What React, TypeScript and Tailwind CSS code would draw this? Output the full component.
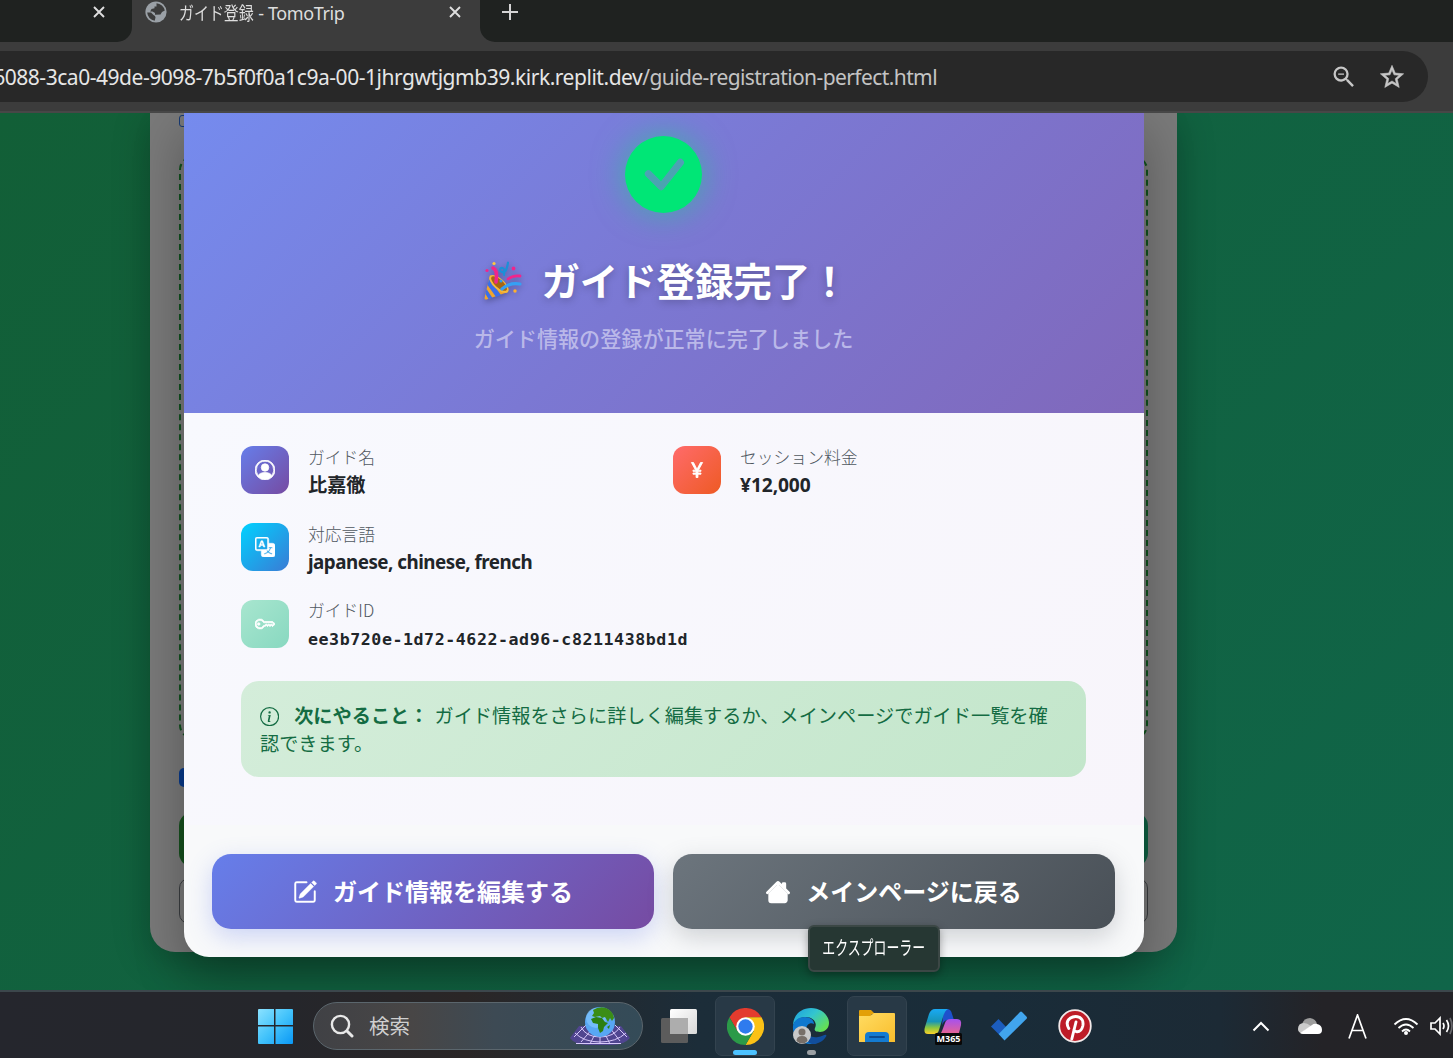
import React from "react";
import {
  BsCheckCircleFill,
  BsPersonCircle,
  BsCurrencyYen,
  BsTranslate,
  BsKey,
  BsInfoCircle,
  BsPencilSquare,
  BsHouseFill,
} from "react-icons/bs";
import { MdOutlineZoomOut, MdStarOutline } from "react-icons/md";

function CloseIcon() {
  return (
    <svg width="12" height="12" viewBox="0 0 12 12" className="shrink-0">
      <path d="M1 1l10 10M11 1L1 11" stroke="#dedede" strokeWidth="1.9" />
    </svg>
  );
}

function GlobeIcon() {
  return (
    <svg width="22" height="22" viewBox="0 0 22 22" className="mt-[1px] shrink-0">
      <circle cx="11" cy="11" r="10.600" fill="#9aa0a6" />
      <path
        d="M11.500 2.200A8.900 8.900 0 0 1 19.800 9.500L17 11l-1.500 2.500-5.500.3V12L7.500 10.500H5.200L6.500 8l3-.8V5.500h2zM2.200 11.500H6l2.500 2.500 1.500 1 .5 1.500-.8 3.300A8.900 8.900 0 0 1 2.200 11.500z"
        fill="#3c3c3c"
      />
    </svg>
  );
}

function TabStrip() {
  return (
    <div className="flex h-[42px] shrink-0 bg-[#3c3c3c]">
      <div className="flex w-[132px] justify-end rounded-br-[15px] bg-[#1f2220] pt-[6px] pr-[27px]">
        <CloseIcon />
      </div>
      <div className="flex w-[348px] items-start pl-[13px]">
        <GlobeIcon />
        <div className="ml-[12px] w-[270px] pt-[1px] text-[18px] leading-[24px] whitespace-nowrap text-[#dedede]">
          <span className="inline-block w-[75px] origin-left scale-x-[0.83]">ガイド登録</span>
          <span className="tracking-[-0.4px]"> - TomoTrip</span>
        </div>
        <div className="pt-[6px]">
          <CloseIcon />
        </div>
      </div>
      <div className="flex-1 rounded-bl-[15px] bg-[#1f2220] pt-[4px] pl-[22px]">
        <svg width="16" height="16" viewBox="0 0 16 16">
          <path d="M8 0v16M0 8h16" stroke="#d4d4d4" strokeWidth="2" />
        </svg>
      </div>
    </div>
  );
}

function Toolbar() {
  return (
    <div className="h-[71px] shrink-0 border-b-2 border-[#474747] bg-[#3c3c3c] pt-[9px] pr-[25px]">
      <div className="flex h-[51px] items-center rounded-r-full bg-[#282828]">
        <div className="flex w-[937px] shrink-0 justify-end overflow-hidden text-[21px] leading-[30px] whitespace-nowrap">
          <span className="tracking-[-0.46px] text-[#e6e6e6]">
            6088-3ca0-49de-9098-7b5f0f0a1c9a-00-1jhrgwtjgmb39.kirk.replit.dev
          </span>
          <span className="tracking-[-0.590px] text-[#c4c4c4]">/guide-registration-perfect.html</span>
        </div>
        <div className="flex flex-1 items-center justify-end gap-[20px] pr-[22px] text-[#c7c7c7]">
          <MdOutlineZoomOut className="size-[28px]" />
          <MdStarOutline className="size-[28px] stroke-current stroke-[0.5]" />
        </div>
      </div>
    </div>
  );
}

function PartyPopper() {
  return (
    <svg width="40" height="40" viewBox="0 0 40 40" className="drop-shadow-[0_2px_3px_rgba(0,0,0,0.3)]">
      <path d="M7 14L1.500 37q0 2 2 1.500L25 31z" fill="#f0a52e" />
      <path d="M6 18l12 16-5 2L4.500 24zM3.500 28l6 9-4 1-3-5z" fill="#3c6fe8" />
      <ellipse cx="16" cy="23" rx="12" ry="5.500" transform="rotate(42 16 23)" fill="#f6b93c" />
      <ellipse cx="16" cy="22.500" rx="10" ry="4" transform="rotate(42 16 22.500)" fill="#a56613" />
      <path d="M10 7q5 2 3 14" fill="none" stroke="#f0258c" strokeWidth="3.600" strokeLinecap="round" />
      <path d="M25 18q5-4 12-3" fill="none" stroke="#f0258c" strokeWidth="2.800" strokeLinecap="round" />
      <path d="M19 28q8-7 18-5" fill="none" stroke="#35a0f4" strokeWidth="3.200" strokeLinecap="round" />
      <path d="M25 1.500q-1 7-3 9t-5-1q0-3 2.500-2.500t1.500 7" fill="none" stroke="#1b90d8" strokeWidth="2.200" strokeLinecap="round" />
      <circle cx="11" cy="2.500" r="1.600" fill="#ffc83d" />
      <circle cx="30.500" cy="7.500" r="1.900" fill="#f0258c" />
      <circle cx="4" cy="9.500" r="1.600" fill="#f0258c" />
      <circle cx="32" cy="30" r="1.700" fill="#ffb02e" />
      <circle cx="18" cy="20" r="1.500" fill="#2d9bf0" />
    </svg>
  );
}

function ModalHeader() {
  return (
    <div className="flex h-[300px] flex-col items-center bg-linear-[135deg,#758bee_0%,#7b78d3_50%,#8068bb_100%] pt-[23px]">
      <BsCheckCircleFill className="mr-[1px] size-[77px] text-[#00e676] drop-shadow-[0_0_16px_rgba(0,230,118,0.5)]" />
      <div className="mt-[40px] flex h-[56px] items-center pl-[4px]">
        <PartyPopper />
        <h1 className="ml-[18px] text-[38.4px] leading-[56px] font-bold text-white [text-shadow:0_2px_8px_rgba(0,0,0,0.25)]">
          ガイド登録完了！
        </h1>
      </div>
      <p className="mt-[13px] mr-[1px] text-[21.1px] leading-[34px] font-medium text-[#bab8e9]">
        ガイド情報の登録が正常に完了しました
      </p>
    </div>
  );
}

type FieldProps = {
  icon: React.ReactNode;
  tile: string;
  label: string;
  children: React.ReactNode;
};

function Field({ icon, tile, label, children }: FieldProps) {
  return (
    <div className="flex h-[48px] items-center">
      <div className={"flex size-[48px] shrink-0 items-center justify-center rounded-[12px] text-[20px] text-white " + tile}>
        {icon}
      </div>
      <div className="ml-[19px] pt-[2px] whitespace-nowrap">
        <div className="font-['Noto_Sans_CJK_JP',sans-serif] text-[16.8px] leading-[27px] font-light text-[#4f575f]">{label}</div>
        <div className="text-[19.2px] leading-[28px] font-bold text-[#212529]">{children}</div>
      </div>
    </div>
  );
}

function ModalBody() {
  return (
    <div className="h-[412px] bg-linear-[135deg,#f8f9fe,#f8f5fb] px-[57px] pt-[33px]">
      <div className="grid grid-cols-[432px_1fr] gap-y-[29px]">
        <Field icon={<BsPersonCircle className="stroke-current stroke-[0.6]" />} tile="bg-linear-[135deg,#667eea,#764ba2]" label="ガイド名">
          比嘉徹
        </Field>
        <Field icon={<BsCurrencyYen className="stroke-current stroke-[0.7]" />} tile="bg-linear-[135deg,#ff6b6b,#ee5a24]" label="セッション料金">
          <span className="tracking-[-0.1px]">¥12,000</span>
        </Field>
        <div className="col-span-2">
          <Field icon={<BsTranslate className="stroke-current stroke-[0.4]" />} tile="bg-linear-[135deg,#00d2ff,#3a7bd5]" label="対応言語">
            <span className="text-[18.8px] tracking-[-0.500px]">japanese, chinese, french</span>
          </Field>
        </div>
        <div className="col-span-2">
          <Field icon={<BsKey className="stroke-current stroke-[0.6]" />} tile="bg-linear-[135deg,#a8e6cf,#88d8c0]" label="ガイドID">
            <span className="font-['DejaVu_Sans_Mono',monospace] text-[16.6px] tracking-[0.565px]">
              ee3b720e-1d72-4622-ad96-c8211438bd1d
            </span>
          </Field>
        </div>
      </div>
      <div className="mt-[33px] h-[96px] w-[845px] rounded-[18px] bg-linear-[135deg,#d4edda,#c3e6cb] pt-[21px] pr-[30px] pl-[19px] text-[19.2px] leading-[28px] text-[#146c43]">
        <BsInfoCircle className="mr-[15px] inline-block align-[-3px]" />
        <b className="font-bold">次にやること：</b>
        <span className="ml-[6px]">ガイド情報をさらに詳しく編集するか、メインページでガイド一覧を確認できます。</span>
      </div>
    </div>
  );
}

function ModalFooter() {
  return (
    <div className="flex h-[132px] gap-[19px] bg-[#f8f9fa] px-[28px] pt-[29px] text-[24px] font-bold text-white">
      <button className="flex h-[75px] w-[442px] items-center justify-center gap-[16px] rounded-[19px] bg-linear-[135deg,#667eea,#764ba2] shadow-[0_8px_25px_rgba(102,126,234,0.3)]">
        <BsPencilSquare className="stroke-current stroke-[0.3]" />
        <span>ガイド情報を編集する</span>
      </button>
      <button className="flex h-[75px] w-[442px] items-center justify-center gap-[17px] rounded-[19px] bg-linear-[135deg,#6c757d,#495057] shadow-[0_8px_25px_rgba(108,117,125,0.3)]">
        <BsHouseFill className="stroke-current stroke-[0.9]" />
        <span className="-ml-[1px]">メインページに戻る</span>
      </button>
    </div>
  );
}

function RegistrationCard() {
  return (
    <div className="mx-[150px] h-[839px] w-[1027px] rounded-b-[25px] bg-[#797979] px-[29px] pt-[2px] shadow-[0_8px_38px_rgba(0,0,0,0.24)]">
      <div className="h-[12px] w-[12px] rounded-[3px] border border-[#173a73]" />
      <div className="mt-[29px] h-[583px] rounded-[14px] border-2 border-dashed border-[#10511d]" />
      <div className="mt-[29px] h-[19px] w-[90px] rounded-[5px] bg-[#07398a]" />
      <div className="mt-[25px] h-[55px] rounded-[14px] bg-linear-[90deg,#15501d,#0d5f42]" />
      <div className="mt-[11px] h-[46px] rounded-[10px] border border-[#3a3d40]" />
    </div>
  );
}

function Page() {
  return (
    <main className="relative h-[877px] shrink-0 overflow-hidden bg-linear-[135deg,#125f37,#106549]">
      <RegistrationCard />
      <section className="absolute top-0 left-[184px] w-[960px] rounded-b-[25px] shadow-[0_20px_50px_rgba(0,0,0,0.3)]">
        <div className="overflow-hidden rounded-b-[25px]">
          <ModalHeader />
          <ModalBody />
          <ModalFooter />
        </div>
      </section>
    </main>
  );
}

function GlobeOnGrid() {
  return (
    <svg width="62" height="40" viewBox="0 0 62 40">
      <path d="M10 20h42l9 12q-6 7-18 7H18Q5 38 1 32z" fill="#5b43a8" opacity=".7" />
      <path d="M12 21q5 10 19 10t20-10M6 27q9 9 25 9t26-9M7 37.500h45M17 19L5 31M24 22L12 36M26 28l-5 10M31 29v9M36 28l5 10M41 22l10 13M46 19l12 12" fill="none" stroke="#d7c8fa" strokeWidth="1" />
      <circle cx="31" cy="16" r="15" fill="#58a7f4" />
      <circle cx="27" cy="12" r="10" fill="#86c9ff" opacity=".6" />
      <path d="M24 4q6-4 13-2 7 3 8 10l-2 3-2-3-2 4-3-5-3 1-2-2-5 1-3-1 2-3z" fill="#3b8d16" />
      <path d="M22 13l5-2 6 1 3 4 3 1-4 4-1 4-3 2-2-5v-4l-5-1z" fill="#2c7f13" />
      <path d="M38 21l3-2-1 4z" fill="#2c7f13" />
    </svg>
  );
}

function ChromeIcon() {
  return (
    <svg width="37" height="37" viewBox="0 0 48 48">
      <path d="M3.200 12A24 24 0 0 1 44.800 12H24L13.600 30z" fill="#e33b2e" />
      <path d="M44.800 12A24 24 0 0 1 24 48L34.400 30 24 12z" fill="#fbc116" />
      <path d="M24 48A24 24 0 0 1 3.200 12L13.600 30 34.400 30z" fill="#2b9a48" />
      <circle cx="24" cy="24" r="12" fill="#fff" />
      <circle cx="24" cy="24" r="9.300" fill="#2f7bee" />
    </svg>
  );
}

function EdgeIcon() {
  return (
    <svg width="38" height="38" viewBox="0 0 38 38">
      <defs>
        <linearGradient id="edgeTop" x1="0" y1="0" x2="1" y2=".7">
          <stop offset="0" stopColor="#1b9de0" />
          <stop offset=".5" stopColor="#33c5cf" />
          <stop offset="1" stopColor="#65e052" />
        </linearGradient>
      </defs>
      <path d="M1 19C1 8 9 1 19 1s18 7 18 15c0 6-5 9-9 9-5 0-6-2-5-4 3-6-3-11-9-11C7 10 2 14 1 19z" fill="url(#edgeTop)" />
      <path d="M1 19C2 13 7 10 13 10c5 0 9 3 9 7-4-2-8 1-8 6 0 6 5 10 11 13-2 1-4 1-6 1C9 37 0 29 1 19z" fill="#0f78cf" />
      <path d="M14 22c0 6 6 9 12 8 4 0 7-3 8-2 1 0 0 2-1 3-3 4-8 6-13 6-7-2-10-9-6-15z" fill="#114e9c" />
      <circle cx="10" cy="28" r="9" fill="#c9c9c9" />
      <circle cx="10" cy="25" r="3.500" fill="#776f69" />
      <path d="M4.500 34q0-5 5.500-5t5.500 5q-5 5-11 0z" fill="#776f69" />
    </svg>
  );
}

function FolderIcon() {
  return (
    <svg width="38" height="34" viewBox="0 0 38 34">
      <defs>
        <linearGradient id="folder" x1="0" y1="0" x2="1" y2="1">
          <stop offset="0" stopColor="#ffdc62" />
          <stop offset="1" stopColor="#f9bd2c" />
        </linearGradient>
      </defs>
      <path d="M1 2q0-1 1-1h11l4 4h-3l-2 3H1z" fill="#e3a008" />
      <path d="M1 7h11l4-3h20q1 0 1 1v28H1z" fill="url(#folder)" />
      <path d="M7 33V27q0-4 4-4h16q4 0 4 4v6z" fill="#147bd1" />
      <path d="M12 28h14" stroke="#0b4c92" strokeWidth="2" strokeLinecap="round" />
    </svg>
  );
}

function CopilotIcon() {
  return (
    <svg width="38" height="38" viewBox="0 0 38 38">
      <defs>
        <linearGradient id="copilotLeft" x1="0" y1="0" x2="0" y2="1">
          <stop offset="0" stopColor="#19a9f4" />
          <stop offset=".5" stopColor="#1795b8" />
          <stop offset=".75" stopColor="#8bc63e" />
          <stop offset="1" stopColor="#fbd029" />
        </linearGradient>
        <linearGradient id="copilotRight" x1="0" y1="0" x2="0" y2="1">
          <stop offset="0" stopColor="#a551ef" />
          <stop offset="1" stopColor="#f4677f" />
        </linearGradient>
      </defs>
      <path d="M20 2h3q4 0 5 5l2 6h-6q-4 0-6 5z" fill="#1e50cc" />
      <path d="M11 2h13q-3 1-5 8l-4 13q-1 4-5 4H4q-5 0-3-7L5 7q2-5 6-5z" fill="url(#copilotLeft)" />
      <path d="M27 12h6q5 0 4 6l-3 12H12q4-1 6-6l3-8q1-4 6-4z" fill="url(#copilotRight)" />
      <rect x="11" y="26" width="27" height="12" rx="1.500" fill="#080808" />
      <text x="24.500" y="35.300" textAnchor="middle" fontSize="9" fontWeight="700" fill="#fff" fontFamily="Noto Sans, sans-serif">
        M365
      </text>
    </svg>
  );
}

type TaskSlotProps = { children: React.ReactNode; active?: boolean; mark?: string };

function TaskSlot({ children, active = false, mark = "" }: TaskSlotProps) {
  return (
    <div
      className={
        "relative flex size-[60px] items-center justify-center rounded-[7px] border " +
        (active ? "border-[#33434f] bg-[#283946]" : "border-transparent")
      }
    >
      {children}
      {mark && <span className={"absolute bottom-0 h-[5px] rounded-full " + mark} />}
    </div>
  );
}

function Taskbar() {
  return (
    <footer className="flex h-[68px] shrink-0 items-center border-t-2 border-[#3c474c] bg-linear-[90deg,#25262d_0%,#25262b_20%,#2a2626_32%,#1c2d39_48%,#192c39_68%,#1c2a35_84%,#242327_91%,#232327_100%] pt-[2px] pl-[257px]">
      <svg width="36" height="36" viewBox="0 0 36 36" className="shrink-0">
        <defs>
          <linearGradient id="windows" x1="0" y1="0" x2="1" y2="1">
            <stop offset="0" stopColor="#8be2ff" />
            <stop offset=".5" stopColor="#43c3fb" />
            <stop offset="1" stopColor="#0a98f5" />
          </linearGradient>
        </defs>
        <path d="M1 2q0-1 1-1h15v16H1zM18.500 1H35q1 0 1 1v15H18.500zM1 18.500h16V36H2q-1 0-1-1zM18.500 18.500H36V35q0 1-1 1H18.500z" fill="url(#windows)" />
      </svg>
      <div className="ml-[20px] flex h-[48px] w-[330px] shrink-0 items-center rounded-full border border-[#5b666d] bg-linear-[90deg,#404145_0%,#484646_30%,#3d4a54_55%,#344b58_100%] pr-[11px] pl-[16px]">
        <svg width="24" height="24" viewBox="0 0 24 24" fill="none" stroke="#e8e8e8" strokeWidth="2.400">
          <circle cx="10.500" cy="10.500" r="8.600" />
          <path d="M17 17l5 5" strokeWidth="3" strokeLinecap="round" />
        </svg>
        <span className="ml-[15px] flex-1 text-[20.500px] leading-[30px] text-[#cfcfcf]">検索</span>
        <GlobeOnGrid />
      </div>
      <div className="ml-[6px] flex gap-[6px]">
        <TaskSlot>
          <svg width="36" height="34" viewBox="0 0 36 34">
            <defs>
              <linearGradient id="pane" x1="0" y1="0" x2="1" y2="1">
                <stop offset="0" stopColor="#fff" />
                <stop offset="1" stopColor="#d8d8d8" />
              </linearGradient>
            </defs>
            <rect x="9" y="0" width="27" height="25" rx="1.500" fill="url(#pane)" />
            <rect x="0" y="9" width="27" height="25" rx="1.500" fill="#5c5c5c" />
            <path d="M9 9h18v16H9z" fill="#adadad" />
          </svg>
        </TaskSlot>
        <TaskSlot active mark="w-[24px] bg-[#4cc2ff]">
          <ChromeIcon />
        </TaskSlot>
        <TaskSlot mark="w-[9px] bg-[#9a9fa3]">
          <EdgeIcon />
        </TaskSlot>
        <TaskSlot active>
          <FolderIcon />
        </TaskSlot>
        <TaskSlot>
          <CopilotIcon />
        </TaskSlot>
        <TaskSlot>
          <svg width="38" height="30" viewBox="0 0 38 30">
            <path d="M1 15.500L8.500 8l9.500 10-4 10.500z" fill="#1c5dbe" />
            <path d="M14.500 29.500L8.700 23 30 1q1-1 2 0l4.600 4.800q.8 1 0 2z" fill="#41a5ee" />
          </svg>
        </TaskSlot>
        <TaskSlot>
          <svg width="34" height="34" viewBox="0 0 34 34">
            <circle cx="17" cy="17" r="15.800" fill="#bd1c27" stroke="#f2e9e9" strokeWidth="1.800" />
            <path d="M10.800 19.500Q7 13 12 9.300q4.500-3 9.500-1Q26 11 24.800 17q-1.500 6-6 5.700-2.300-.3-2.800-2M18 13l-4.200 17" fill="none" stroke="#fff" strokeWidth="2.900" strokeLinecap="round" />
          </svg>
        </TaskSlot>
      </div>
      <div className="ml-auto flex h-[30px] items-center overflow-hidden text-white">
        <svg width="18" height="11" viewBox="0 0 18 11" fill="none" stroke="#fff" strokeWidth="2">
          <path d="M1.500 9.500L9 2l7.500 7.500" />
        </svg>
        <svg width="25" height="17" viewBox="0 0 25 17" className="ml-[27px]">
          <path d="M5 6q2-6 8-6 6 1 7 6l-10 5z" fill="#9d9d9d" />
          <path d="M1 11q0-6 6-6 3 0 7 3L4 15q-3-1-3-4z" fill="#cbcbcb" />
          <path d="M3 15l12-8q2-2 5-1 5 1 5 6 0 4-4 4H6q-2 0-3-1z" fill="#fff" />
        </svg>
        <svg width="19" height="25" viewBox="0 0 19 25" className="ml-[26px]" fill="none" stroke="#fff" strokeWidth="1.700">
          <path d="M1 24.500L9.500 1 18 24.500M4 16.500h11" />
        </svg>
        <svg width="26" height="19" viewBox="0 0 26 19" className="ml-[26px]" fill="none" stroke="#fff" strokeWidth="1.800">
          <path d="M1.500 7.500q11.500-11 23 0M5.500 11q7.500-7 15 0M9 14.500q4-4 8 0" />
          <circle cx="13" cy="16" r="2" fill="#fff" stroke="none" />
        </svg>
        <svg width="23" height="20" viewBox="0 0 23 20" className="ml-[11px]" fill="none" stroke="#fff" strokeWidth="1.700">
          <path d="M1 7v6h4l5 5V2L5 7zM13 7q2 3 0 6M16.500 4q4 6 0 12" />
          <path d="M20 2q4 8 0 16" stroke="#66666a" />
        </svg>
      </div>
    </footer>
  );
}

export default function App() {
  return (
    <div className="relative flex h-[1058px] w-[1453px] flex-col overflow-hidden bg-[#3c3c3c] font-['Noto_Sans','Noto_Sans_CJK_JP',sans-serif]">
      <TabStrip />
      <Toolbar />
      <Page />
      <Taskbar />
      <div className="absolute top-[925px] left-[808px] flex h-[47px] w-[132px] items-center justify-center rounded-[6px] border-2 border-[#3b4745] bg-[#263733] text-white shadow-[0_3px_8px_rgba(0,0,0,0.35)]">
        <span className="scale-x-[0.68] text-[19px] whitespace-nowrap">エクスプローラー</span>
      </div>
    </div>
  );
}
